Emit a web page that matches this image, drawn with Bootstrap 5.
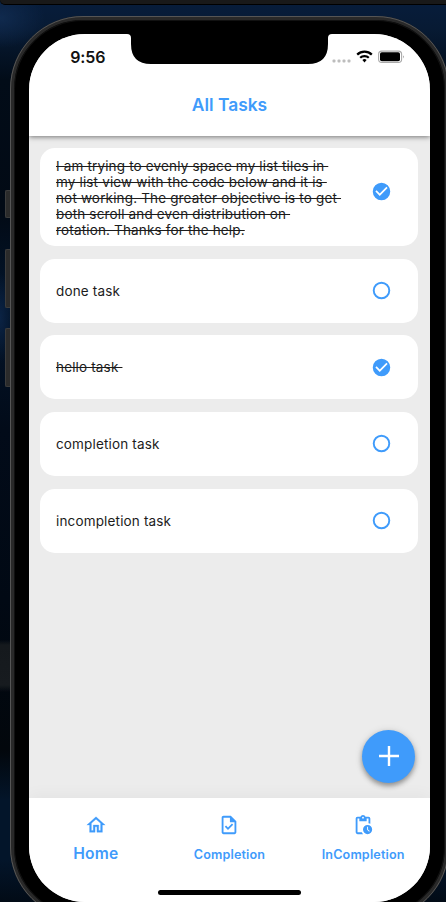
<!DOCTYPE html>
<html lang="en">
<head>
<meta charset="utf-8">
<meta name="viewport" content="width=device-width, initial-scale=1">
<title>All Tasks</title>
<link href="https://cdn.jsdelivr.net/npm/bootstrap@5.3.0/dist/css/bootstrap.min.css" rel="stylesheet">
<style>
:root{--blue:#3f9bfb}
html,body{height:902px;overflow:hidden}
body{font-family:Inter,"Liberation Sans",sans-serif;color:#1c1c1c;padding-top:16px;
 background:radial-gradient(ellipse 45px 30px at 0 18px,#102a4e,transparent),radial-gradient(ellipse 14px 45px at 0 318px,#0b2344,transparent),linear-gradient(transparent 640px,#15191d 645px,#171b1f 685px,transparent 692px),linear-gradient(#071d3c 0,#071a33 30px,#020c18 80px,#020a15 210px,#03152b 300px,#020b19 430px,#010914 600px,#02070c 750px,#03152a 800px,#03152a 860px,#020b16 902px)}
.desk-window{position:absolute;left:0;top:0;width:460px;height:5px;background:#191919;border-bottom:1px solid #000;border-radius:0 0 0 8px}
.phone{width:439px;height:904px;margin-left:10px;background:#000;border:4px solid #292929;border-radius:73px;padding:14px 15px;box-shadow:inset 0 0 0 1px #111;outline:1px solid #555;outline-offset:-1px}
.screen{width:401px;height:868px;border-radius:56px;background:#ececec}
.side-key{left:5px;width:5px;background:#2b2b2b;border:1px solid #3c3c3c;border-right:0;border-radius:2px 0 0 2px}
.notch{left:98px;top:-1px}
.status{height:46px;padding:0 25px 0 41.200px}
.clock{font-size:16px;font-weight:600;color:#111;letter-spacing:-.1px;line-height:46px}
.top-bar{height:102px;background:#fff;box-shadow:0 1px 5px rgba(0,0,0,.5);z-index:1}
.title{font-size:17.4px;font-weight:600;color:var(--blue);line-height:50px}
.tasks{padding:11.700px 12px 0 11.400px;gap:12.600px}
.task{min-height:64px;border-radius:15px;padding:8.500px 26.500px 8.500px 15.600px}
.task.long-task{padding-top:10px}
.task-text{font-size:13.500px;line-height:16px;white-space:pre;letter-spacing:.160px}
.task-text.done{text-decoration:line-through;text-decoration-thickness:1px}
.long-task svg{margin-bottom:13px}
.bottom-bar{height:104px;background:#fff;box-shadow:0 -4px 14px rgba(0,0,0,.035);padding-top:15.500px}
.tab{color:var(--blue);font-size:12.600px;font-weight:600;line-height:20px;width:133.670px;letter-spacing:.150px}
.tab svg{margin-bottom:9px}
.tab.active{font-size:15.600px}
.tab.active span{margin-top:-1px}
.add{right:15px;bottom:119px;width:53px;height:53px;border-radius:50%;background:var(--blue);box-shadow:0 3px 5px rgba(0,0,0,.34),0 1px 9px rgba(0,0,0,.12);border:0;padding:0 0 1px}
.home-line{left:129px;bottom:7.500px;width:143px;height:5px;border-radius:3px;background:#000}
</style>
<script src="https://cdn.jsdelivr.net/npm/bootstrap@5.3.0/dist/js/bootstrap.bundle.min.js"></script>
</head>
<body>
<svg width="0" height="0" class="position-absolute"><defs>
<symbol id="checked" viewBox="0 0 24 24"><path fill="#3f9bfb" d="M12 2a10 10 0 1 0 0 20 10 10 0 0 0 0-20zm-2 15l-5-5 1.400-1.400 3.600 3.600 7.600-7.600L19 8z"/></symbol>
<symbol id="open" viewBox="0 0 24 24"><circle cx="12" cy="12" r="8.900" fill="none" stroke="#3f9bfb" stroke-width="2.200"/></symbol>
</defs></svg>
<div class="desk-window"></div>
<i class="side-key position-absolute" style="top:190px;height:28px"></i>
<i class="side-key position-absolute" style="top:249px;height:59px"></i>
<i class="side-key position-absolute" style="top:328px;height:59px"></i>
<div class="phone">
<div class="screen position-relative overflow-hidden d-flex flex-column">
 <header class="top-bar position-relative flex-shrink-0">
  <div class="status d-flex justify-content-between">
   <span class="clock">9:56</span>
   <svg width="74" height="46" viewBox="0 0 74 46"><g fill="#bdbdbd"><rect x="1.500" y="25.500" width="3" height="3" rx="1"/><rect x="6.500" y="25.500" width="3" height="3" rx="1"/><rect x="11.500" y="25.500" width="3" height="3" rx="1"/><rect x="16.500" y="25.500" width="3" height="3" rx="1"/></g>
   <g transform="translate(0 .4)" fill="none" stroke="#000" stroke-width="2.200"><path d="M26.200 20.200a10.400 10.400 0 0 1 14.600 0"/><path d="M29.200 23.400a6.100 6.100 0 0 1 8.600 0"/></g><path d="M33.500 28.500l-2.100-2.400a3 3 0 0 1 4.200 0z"/>
   <rect x="47.600" y="17.100" width="23" height="11.400" rx="3.200" fill="#fff" stroke="#aaa" stroke-width="1.100"/><rect x="49" y="18.300" width="20" height="9" rx="1.800"/><path d="M72 21.200q1.600 1.500 0 3.200z" fill="#888"/></svg>
  </div>
  <div class="title text-center">All Tasks</div>
  <svg class="notch position-absolute" width="205" height="31" viewBox="0 0 205 31"><path d="M0 0H205V1Q201 1 201 5V11Q201 31 181 31H24Q4 31 4 11V5Q4 1 0 1z"/></svg>
 </header>
 <main class="tasks d-flex flex-column flex-grow-1">
  <div class="task long-task bg-white d-flex align-items-center justify-content-between flex-shrink-0"><div class="task-text done">I am trying to evenly space my list tiles in 
my list view with the code below and it is 
not working. The greater objective is to get 
both scroll and even distribution on 
rotation. Thanks for the help.</div><svg width="21" height="21"><use href="#checked"/></svg></div>
  <div class="task bg-white d-flex align-items-center justify-content-between flex-shrink-0"><div class="task-text">done task</div><svg width="21" height="21"><use href="#open"/></svg></div>
  <div class="task bg-white d-flex align-items-center justify-content-between flex-shrink-0"><div class="task-text done">hello task </div><svg width="21" height="21"><use href="#checked"/></svg></div>
  <div class="task bg-white d-flex align-items-center justify-content-between flex-shrink-0"><div class="task-text">completion task</div><svg width="21" height="21"><use href="#open"/></svg></div>
  <div class="task bg-white d-flex align-items-center justify-content-between flex-shrink-0"><div class="task-text">incompletion task</div><svg width="21" height="21"><use href="#open"/></svg></div>
 </main>
 <nav class="bottom-bar d-flex flex-shrink-0">
  <div class="tab active d-flex flex-column align-items-center"><svg width="22" height="22" viewBox="0 0 24 24" fill="#3f9bfb"><path stroke="#3f9bfb" stroke-width=".3" d="M12 5.700l5 4.500V18h-2v-6H9v6H7v-7.800l5-4.500M12 3L2 12h3v8h6v-6h2v6h6v-8h3L12 3z"/></svg><span>Home</span></div>
  <div class="tab d-flex flex-column align-items-center"><svg width="22" height="22" viewBox="0 0 24 24" fill="#3f9bfb"><path d="M14 2H6c-1.100 0-2 .9-2 2v16c0 1.100.9 2 2 2h12c1.100 0 2-.9 2-2V8l-6-6zm4 18H6V4h7v5h5v11zM10.900 17.500l-3.500-3.500 1.400-1.400 2.100 2.100 4.300-4.300 1.400 1.400z"/></svg><span>Completion</span></div>
  <div class="tab d-flex flex-column align-items-center"><svg width="22" height="22" viewBox="0 0 24 24" fill="#3f9bfb"><path d="M17 12a5 5 0 1 0 0 10 5 5 0 0 0 0-10zm1.650 7.350L16.500 17.200V14h1v2.790l1.850 1.850zM18 3h-3.180a3 3 0 0 0-5.640 0H6a2 2 0 0 0-2 2v15a2 2 0 0 0 2 2h6.110a6.700 6.700 0 0 1-1.420-2H6V5h2v3h8V5h2v5.080c.71.1 1.380.31 2 .6V5a2 2 0 0 0-2-2zm-6 2a1 1 0 1 1 0-2 1 1 0 0 1 0 2z"/></svg><span>InCompletion</span></div>
 </nav>
 <button class="add position-absolute d-flex align-items-center justify-content-center" aria-label="Add task"><svg width="22" height="22" viewBox="0 0 22 22"><path d="M11 1v20M1 11h20" stroke="#fff" stroke-width="2.400"/></svg></button>
 <div class="home-line position-absolute"></div>
</div>
</div>
</body>
</html>
